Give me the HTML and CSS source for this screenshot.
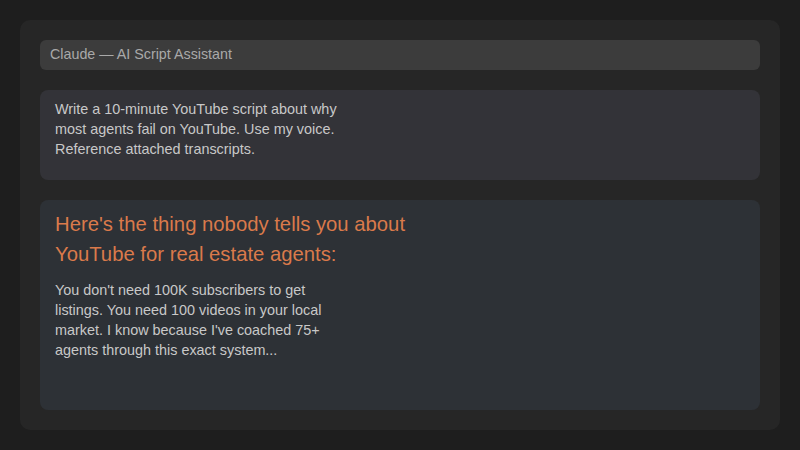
FILE: index.html
```html
<!DOCTYPE html>
<html>
<head>
<meta charset="utf-8">
<link rel="stylesheet" href="styles.css">
</head>
<body>
<div class="window">
  <div class="titlebar">Claude — AI Script Assistant</div>
  <div class="prompt">
    <p class="prompt-text">Write a 10-minute YouTube script about why most agents fail on YouTube. Use my voice. Reference attached transcripts.</p>
  </div>
  <div class="response">
    <h2 class="hook">Here's the thing nobody tells you about YouTube for real estate agents:</h2>
    <p class="body-text">You don't need 100K subscribers to get listings. You need 100 videos in your local market. I know because I've coached 75+ agents through this exact system...</p>
  </div>
</div>
</body>
</html>
```
FILE: styles.css
```css
html, body {
  margin: 0;
  padding: 0;
  background: #1e1e1e;
  font-family: "Liberation Sans", Arial, sans-serif;
}
body {
  padding: 20px;
  width: 800px;
  height: 450px;
  box-sizing: border-box;
}
.window {
  background: #262626;
  border-radius: 10px;
  padding: 20px;
  height: 410px;
  box-sizing: border-box;
  display: flex;
  flex-direction: column;
  gap: 20px;
}
.titlebar {
  background: #3c3c3c;
  border-radius: 6px;
  height: 30px;
  line-height: 29px;
  padding: 0 10px;
  font-size: 14.3px;
  color: #a9a9a9;
}
.prompt {
  background: #333338;
  border-radius: 8px;
  height: 90px;
  box-sizing: border-box;
  padding: 9px 15px;
}
.prompt-text {
  margin: 0;
  max-width: 300px;
  font-size: 14.4px;
  line-height: 20px;
  color: #c8c8c8;
}
.response {
  background: #2d3136;
  border-radius: 8px;
  flex: 1;
  padding: 9px 15px;
}
.hook {
  margin: 0 0 11px;
  max-width: 380px;
  font-size: 20.3px;
  font-weight: normal;
  line-height: 30px;
  color: #da7a4b;
}
.body-text {
  margin: 0;
  max-width: 280px;
  font-size: 14.4px;
  line-height: 20px;
  color: #c8c8c8;
}
```
